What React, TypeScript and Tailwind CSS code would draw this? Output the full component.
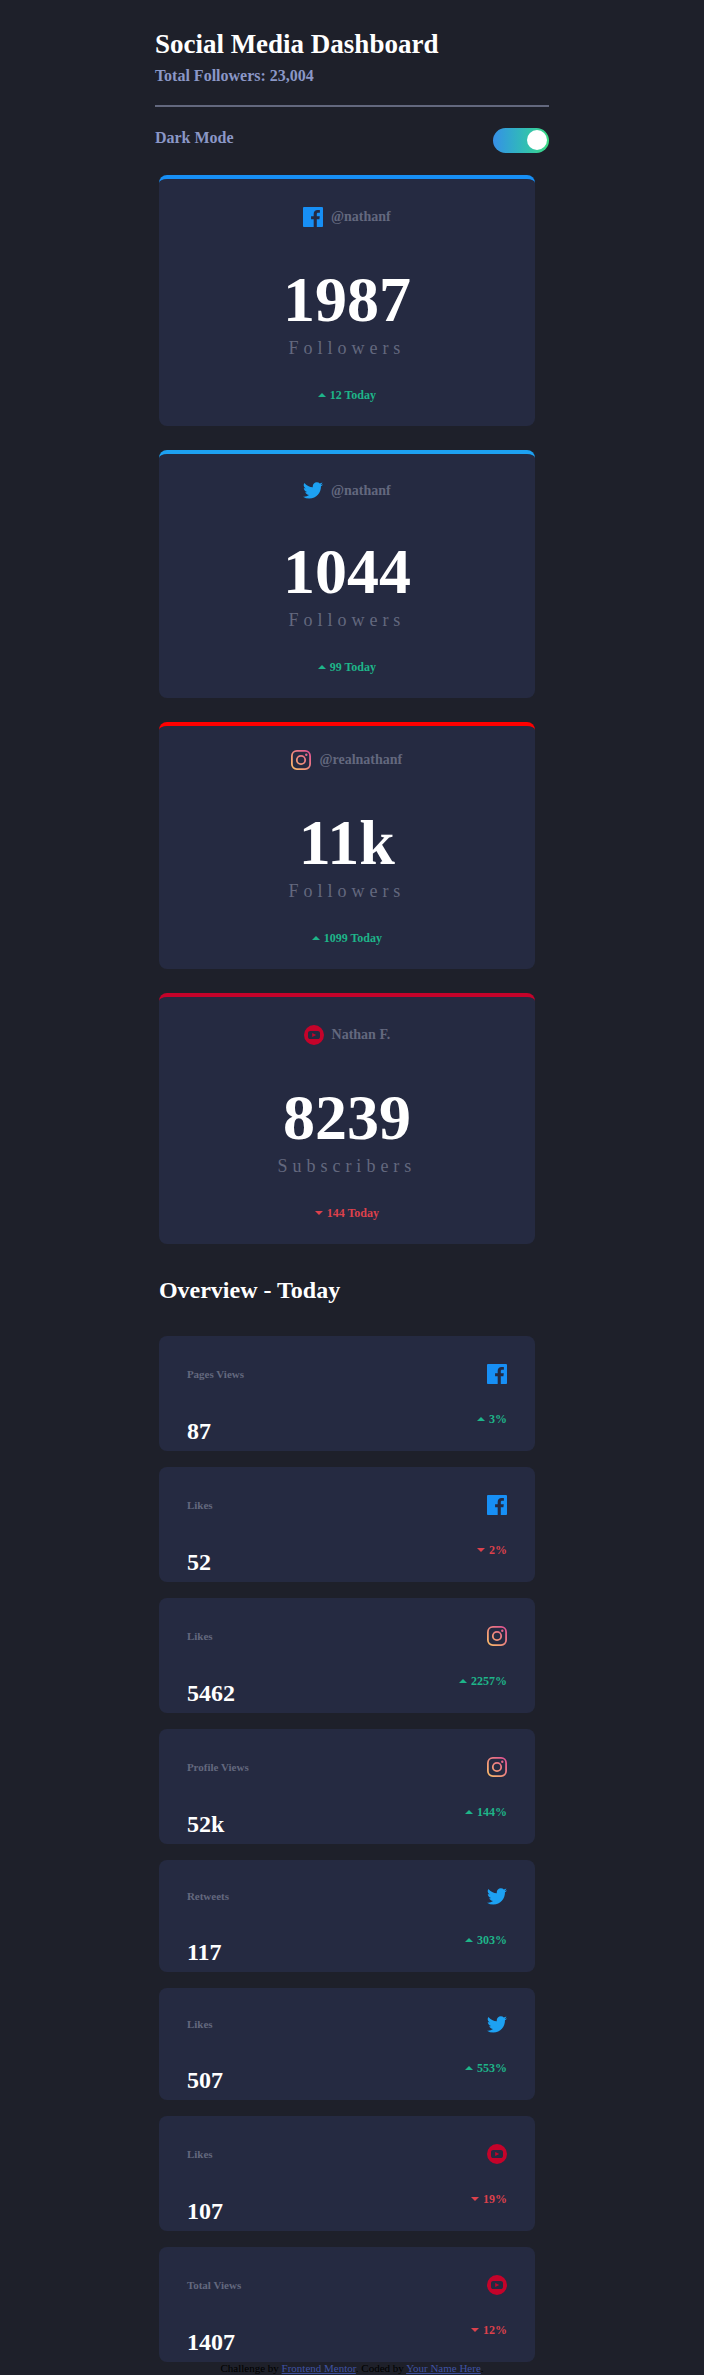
import React, { useState } from "react";

type Network = "facebook" | "twitter" | "instagram" | "youtube";

function NetworkIcon({ network, id }: { network: Network; id: string }) {
  if (network === "facebook") {
    return (
      <svg className="block" width="20" height="20" viewBox="0 0 20 20" aria-label="Facebook" role="img">
        <path
          fill="#178FF5"
          d="M18.896 0H1.104C.494 0 0 .494 0 1.104v17.793C0 19.506.494 20 1.104 20h9.58v-7.745H8.076V9.237h2.606V7.01c0-2.583 1.578-3.99 3.883-3.99 1.104 0 2.052.082 2.329.119v2.7h-1.598c-1.254 0-1.496.597-1.496 1.47v1.928h2.989l-.39 3.018h-2.6V20h5.098c.608 0 1.102-.494 1.102-1.104V1.104C20 .494 19.506 0 18.896 0z"
        />
      </svg>
    );
  }
  if (network === "twitter") {
    return (
      <svg className="block" width="20" height="17" viewBox="0 0 20 17" aria-label="Twitter" role="img">
        <path
          fill="#1DA1F2"
          d="M20 2.172a8.192 8.192 0 01-2.357.646 4.11 4.11 0 001.804-2.27 8.22 8.22 0 01-2.605.996A4.096 4.096 0 0013.847.248c-2.65 0-4.596 2.472-3.998 5.037A11.648 11.648 0 011.392 1a4.109 4.109 0 001.27 5.478 4.086 4.086 0 01-1.858-.513c-.045 1.9 1.318 3.679 3.291 4.075a4.113 4.113 0 01-1.853.07 4.106 4.106 0 003.833 2.849A8.25 8.25 0 010 14.658a11.616 11.616 0 006.29 1.843c7.618 0 11.922-6.434 11.662-12.205A8.354 8.354 0 0020 2.172z"
        />
      </svg>
    );
  }
  if (network === "instagram") {
    const gradient = `instagram-${id}`;
    return (
      <svg className="block" width="20" height="20" viewBox="0 0 20 20" aria-label="Instagram" role="img">
        <defs>
          <linearGradient id={gradient} x1="20" y1="0" x2="0" y2="20" gradientUnits="userSpaceOnUse">
            <stop offset="0" stopColor="#DF4896" />
            <stop offset="0.5" stopColor="#EE877E" />
            <stop offset="1" stopColor="#FDC366" />
          </linearGradient>
        </defs>
        <g fill="none" stroke={`url(#${gradient})`} strokeWidth="1.8">
          <rect x="0.9" y="0.9" width="18.2" height="18.2" rx="5" />
          <circle cx="10" cy="10" r="4.2" />
        </g>
        <circle cx="15.3" cy="4.7" r="1.2" fill={`url(#${gradient})`} />
      </svg>
    );
  }
  return (
    <svg className="block" width="20" height="20" viewBox="0 0 20 20" aria-label="YouTube" role="img">
      <path
        fill="#C4032A"
        fillRule="evenodd"
        d="M10 0a10 10 0 1 0 0 20a10 10 0 1 0 0-20zM6.3 5.9h7.4c1.4 0 2.3.9 2.3 2.3v3.6c0 1.4-.9 2.3-2.3 2.3H6.3c-1.4 0-2.3-.9-2.3-2.3V8.2c0-1.4.9-2.3 2.3-2.3zM8.200 8v4l4-2z"
      />
    </svg>
  );
}

function Arrow({ up }: { up: boolean }) {
  return (
    <svg className="mr-1 mb-0.5 inline-block align-baseline" width="8" height="4" viewBox="0 0 8 4" aria-hidden="true">
      <path fill={up ? "#1EB589" : "#DC414C"} d={up ? "M0 4l4-4 4 4z" : "M0 0l4 4 4-4z"} />
    </svg>
  );
}

const accounts = [
  { network: "facebook", handle: "@nathanf", count: "1987", unit: "Followers", up: true, change: "12 Today", accent: "border-t-[#178ff5] pt-7" },
  { network: "twitter", handle: "@nathanf", count: "1044", unit: "Followers", up: true, change: "99 Today", accent: "border-t-[#1da1f2] pt-7" },
  { network: "instagram", handle: "@realnathanf", count: "11k", unit: "Followers", up: true, change: "1099 Today", accent: "border-t-[#ff0000] pt-6" },
  { network: "youtube", handle: "Nathan F.", count: "8239", unit: "Subscribers", up: false, change: "144 Today", accent: "border-t-[#c4032a] pt-7" },
] as const;

const overview = [
  { network: "facebook", label: "Pages Views", value: "87", up: true, change: "3%" },
  { network: "facebook", label: "Likes", value: "52", up: false, change: "2%" },
  { network: "instagram", label: "Likes", value: "5462", up: true, change: "2257%" },
  { network: "instagram", label: "Profile Views", value: "52k", up: true, change: "144%" },
  { network: "twitter", label: "Retweets", value: "117", up: true, change: "303%" },
  { network: "twitter", label: "Likes", value: "507", up: true, change: "553%" },
  { network: "youtube", label: "Likes", value: "107", up: false, change: "19%" },
  { network: "youtube", label: "Total Views", value: "1407", up: false, change: "12%" },
] as const;

export default function App() {
  const [dark, setDark] = useState(true);
  return (
    <div className="min-h-screen bg-[#1e202a] font-['Liberation_Serif',serif]">
      <div className="mx-[22%] pt-7">
        <header>
          <h1 className="text-[27px] leading-8 font-bold whitespace-nowrap text-white">Social Media Dashboard</h1>
          <p className="text-base leading-8 font-bold text-[#8b97c6]">Total Followers: 23,004</p>
          <hr className="mt-[13px] border-t-2 border-[#63687e]" />
          <div className="mt-5 flex items-start justify-between">
            <label htmlFor="dark-mode" className="text-base leading-[22px] font-bold text-[#8b97c6]">
              Dark Mode
            </label>
            <span className="relative mt-px block h-[25px] w-14">
              <input
                id="dark-mode"
                type="checkbox"
                role="switch"
                checked={dark}
                onChange={(e) => setDark(e.target.checked)}
                className="peer block h-full w-full cursor-pointer appearance-none rounded-full bg-linear-to-r from-[#378fe6] to-[#3eda82]"
              />
              <span className="pointer-events-none absolute top-0.5 left-0.5 size-5 rounded-full bg-white peer-checked:right-0.5 peer-checked:left-auto" />
            </span>
          </div>
        </header>

        <main className="mx-1 mt-[22px] max-w-[376px]">
          <section className="flex flex-col gap-6">
            {accounts.map((a) => (
              <article key={a.network} className={`rounded-lg border-t-4 bg-[#252a41] pb-[23px] text-center ${a.accent}`}>
                <div className="flex items-center justify-center gap-2 pb-1">
                  <NetworkIcon network={a.network} id="account" />
                  <span className="text-sm leading-none font-bold text-[#63687e]">{a.handle}</span>
                </div>
                <p className="mt-8 text-[64px] leading-[73px] font-bold text-white">{a.count}</p>
                <p className="text-lg leading-6 tracking-[5px] text-[#63687e]">{a.unit}</p>
                <p className={`mt-[27px] text-xs leading-4 font-bold ${a.up ? "text-[#1eb589]" : "text-[#dc414c]"}`}>
                  <Arrow up={a.up} />
                  {a.change}
                </p>
              </article>
            ))}
          </section>

          <h2 className="mt-8 text-2xl leading-7 font-bold text-white">Overview - Today</h2>

          <section className="mt-8 flex flex-col gap-4">
            {overview.map((o, i) => (
              <article key={i} className="rounded-lg bg-[#252a41] px-7 pt-7 pb-2">
                <div className="flex items-center justify-between">
                  <p className="text-[11px] leading-none font-bold text-[#63687e]">{o.label}</p>
                  <NetworkIcon network={o.network} id={`overview-${i}`} />
                </div>
                <div className="flex items-start justify-between pt-7">
                  <p className="mt-[7px] text-2xl leading-6 font-bold text-white">{o.value}</p>
                  <p className={`text-xs leading-[15px] font-bold ${o.up ? "text-[#1eb589]" : "text-[#dc414c]"}`}>
                    <Arrow up={o.up} />
                    {o.change}
                  </p>
                </div>
              </article>
            ))}
          </section>
        </main>
      </div>
      <footer className="text-center text-[11px] leading-[13px] text-black">
        Challenge by{" "}
        <a className="text-[#3e52a3] underline" href="https://www.frontendmentor.io">Frontend Mentor</a>. Coded by{" "}
        <a className="text-[#3e52a3] underline" href="#">Your Name Here</a>.
      </footer>
    </div>
  );
}
